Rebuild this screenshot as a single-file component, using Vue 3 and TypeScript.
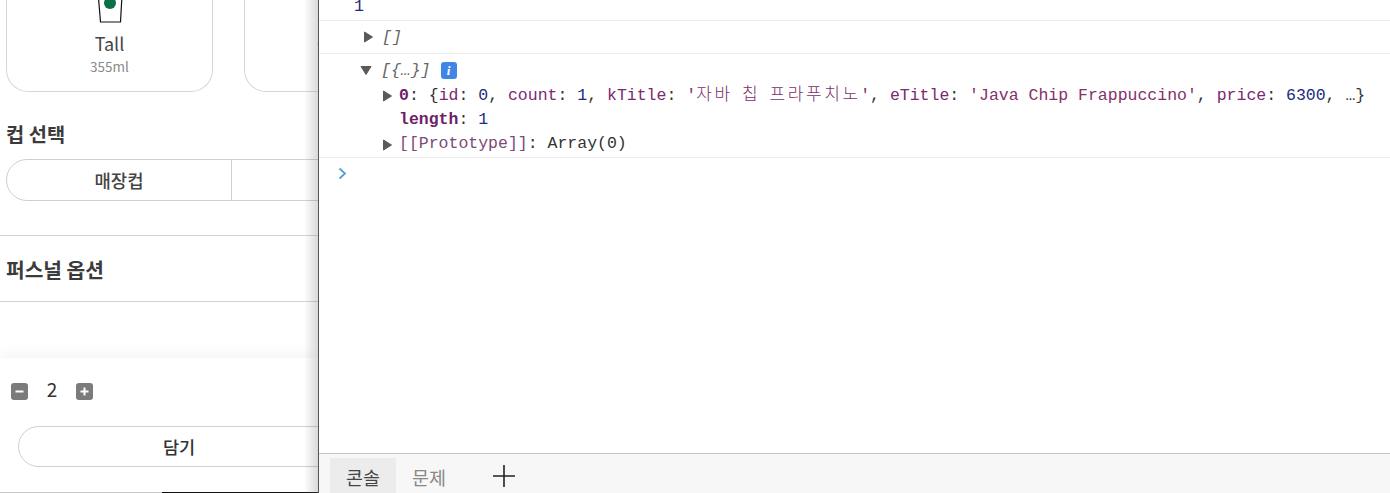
<script setup lang="ts">
interface Size { name: string; volume?: string }
const sizes: Size[] = [
  { name: 'Tall', volume: '355ml' },
  { name: 'Grande' },
]
const quantity = 2
</script>

<template>
  <div class="screen">
    <section class="app">
      <div class="scroll">
        <div class="cards">
          <div v-for="size in sizes" :key="size.name" class="card">
            <svg class="cup" width="34" height="52" viewBox="0 0 34 52">
              <path d="M4.5 15 L29.5 15 L27.5 51 L7.5 51 Z" fill="#fff" stroke="#111" stroke-width="1.2" />
              <circle cx="17" cy="32" r="6" fill="#0b7047" />
            </svg>
            <div class="size-name">{{ size.name }}</div>
            <div v-if="size.volume" class="size-volume">{{ size.volume }}</div>
          </div>
        </div>
        <h3 class="cup-title">컵 선택</h3>
        <div class="segment">
          <div class="seg-item">매장컵</div>
          <div class="seg-item rest"></div>
        </div>
        <div class="personal">퍼스널 옵션</div>
      </div>
      <div class="order">
        <div class="stepper">
          <span class="step"><svg width="17" height="17" viewBox="0 0 17 17"><rect width="17" height="17" rx="3" fill="#7b7b7b" /><rect x="4.5" y="7.5" width="8" height="2" fill="#fff" /></svg></span>
          <span class="qty">{{ quantity }}</span>
          <span class="step"><svg width="17" height="17" viewBox="0 0 17 17"><rect width="17" height="17" rx="3" fill="#7b7b7b" /><rect x="4.5" y="7.5" width="8" height="2" fill="#fff" /><rect x="7.5" y="4.5" width="2" height="8" fill="#fff" /></svg></span>
        </div>
        <div class="add">담기</div>
      </div>
      <div class="peek"></div>
    </section>

    <section class="devtools">
      <div class="log">
        <div class="row row-num"><span class="num">1</span></div>
        <div class="row row-empty">
          <svg class="tri" width="11" height="12" viewBox="0 0 11 12"><path d="M1.5 1 L9.5 6 L1.5 11 Z" fill="#5a5a5a" stroke="#5a5a5a" stroke-linejoin="round" /></svg>
          <span class="summary">[]</span>
        </div>
        <div class="row row-tree">
          <div class="tree-head">
            <svg class="tri-down" width="12" height="11" viewBox="0 0 12 11"><path d="M1 1.5 L11 1.5 L6 9.5 Z" fill="#5a5a5a" stroke="#5a5a5a" stroke-linejoin="round" /></svg>
            <span class="summary">[{…}]</span>
            <span class="info">i</span>
          </div>
          <div class="prop">
            <svg class="tri" width="11" height="12" viewBox="0 0 11 12"><path d="M1.5 1 L9.5 6 L1.5 11 Z" fill="#5a5a5a" stroke="#5a5a5a" stroke-linejoin="round" /></svg>
            <span class="txt"><b class="key">0</b>: {<span class="key">id</span>: <span class="num">0</span>, <span class="key">count</span>: <span class="num">1</span>, <span class="key">kTitle</span>: <span class="str">'<span class="kr">자바 칩 프라푸치노</span>'</span>, <span class="key">eTitle</span>: <span class="str">'Java Chip Frappuccino'</span>, <span class="key">price</span>: <span class="num">6300</span>, …}</span>
          </div>
          <div class="prop">
            <span class="txt"><b class="key">length</b>: <span class="num">1</span></span>
          </div>
          <div class="prop">
            <svg class="tri" width="11" height="12" viewBox="0 0 11 12"><path d="M1.5 1 L9.5 6 L1.5 11 Z" fill="#5a5a5a" stroke="#5a5a5a" stroke-linejoin="round" /></svg>
            <span class="txt"><span class="key proto">[[Prototype]]</span>: Array(0)</span>
          </div>
        </div>
        <div class="prompt">
          <svg width="9" height="13" viewBox="0 0 9 13"><path d="M1.5 1.5 L7 6.5 L1.5 11.5" fill="none" stroke="#4a9fd0" stroke-width="1.7" /></svg>
        </div>
      </div>
      <div class="drawer">
        <div class="tab active">콘솔</div>
        <div class="tab">문제</div>
        <svg class="plus" width="24" height="24" viewBox="0 0 24 24"><path d="M12 1 V23 M1 12 H23" stroke="#222" stroke-width="1.6" /></svg>
      </div>
    </section>
  </div>
</template>

<style>
html, body { margin: 0; background: #fff; overflow: hidden; }
</style>

<style scoped>
.screen {
  display: flex;
  width: 1390px;
  height: 493px;
  overflow: hidden;
  background: #fff;
}
.app {
  position: relative;
  flex: 0 0 318px;
  width: 318px;
  height: 493px;
  overflow: hidden;
  font-family: "Noto Sans CJK KR", "Noto Sans", sans-serif;
  color: #333;
}
.app::after {
  content: "";
  position: absolute;
  top: 0;
  right: 0;
  bottom: 0;
  width: 14px;
  background: linear-gradient(to right, rgba(120,120,120,0), rgba(120,120,120,0.28));
  pointer-events: none;
}
.scroll { height: 358px; overflow: hidden; }
.cards {
  display: flex;
  gap: 31px;
  padding-left: 6px;
  margin-top: -29px;
}
.card {
  flex: 0 0 207px;
  height: 121px;
  box-sizing: border-box;
  border: 1px solid #d6d6d6;
  border-radius: 0 0 22px 22px;
  border-top: none;
  display: flex;
  flex-direction: column;
  align-items: center;
}
.cup { display: block; flex: none; }
.size-name { font-size: 18px; line-height: 24px; margin-top: 8px; color: #444; }
.size-volume { font-size: 13.5px; line-height: 18px; color: #8a8a8a; margin-top: 2px; }
.cup-title {
  margin: 29px 0 0 6px;
  font-size: 19.8px;
  line-height: 26px;
  font-weight: 700;
  color: #3b3b3b;
}
.segment {
  display: flex;
  margin: 12px 0 0 6px;
  width: 450px;
  height: 42px;
  box-sizing: border-box;
  border: 1px solid #cfcfcf;
  border-radius: 21px;
}
.seg-item {
  flex: 0 0 225px;
  box-sizing: border-box;
  border-right: 1px solid #cfcfcf;
  text-align: center;
  font-size: 17.8px;
  font-weight: 500;
  line-height: 40px;
  color: #444;
}
.seg-item.rest { border: none; }
.personal {
  margin-top: 34px;
  height: 67px;
  box-sizing: border-box;
  border-top: 1px solid #d2d2d2;
  border-bottom: 1px solid #d2d2d2;
  padding-left: 6px;
  font-size: 20.3px;
  font-weight: 700;
  line-height: 67px;
  color: #3b3b3b;
}
.order {
  height: 134px;
  box-shadow: 0 -6px 12px rgba(0,0,0,0.035);
  position: relative;
  background: #fff;
}
.stepper {
  display: flex;
  align-items: center;
  padding: 22px 0 0 11px;
  height: 18px;
}
.step { display: block; height: 17px; }
.qty { width: 48px; text-align: center; font-size: 19px; line-height: 18px; color: #333; }
.add {
  margin: 28px 0 0 18px;
  width: 420px;
  height: 41px;
  box-sizing: border-box;
  border: 1px solid #cfcfcf;
  border-radius: 21px;
  padding-right: 98px;
  text-align: center;
  font-size: 17.5px;
  font-weight: 500;
  line-height: 39px;
  color: #333;
}
.peek {
  position: absolute;
  left: 0;
  right: 0;
  bottom: 0;
  height: 1px;
  background: linear-gradient(to right, #c8c8c8 162px, #111 162px);
}
.devtools {
  flex: 1;
  display: flex;
  flex-direction: column;
  height: 493px;
  border-left: 1px solid #555;
  box-sizing: border-box;
  font-family: "Liberation Mono", monospace;
  font-size: 16.5px;
  color: #333;
}
.log { flex: 1; overflow: hidden; }
.row { border-bottom: 1px solid #eeeeee; box-sizing: border-box; }
.row-num { height: 21px; padding-left: 35px; line-height: 13px; }
.row-empty {
  height: 33px;
  padding-left: 44px;
  display: flex;
  align-items: center;
  gap: 8px;
}
.row-tree { height: 104px; padding-top: 4px; }
.tree-head {
  display: flex;
  align-items: center;
  height: 25px;
  padding-left: 41px;
}
.tri-down { margin-right: 9px; }
.summary { font-style: italic; color: #666; }
.info {
  margin-left: 10px;
  width: 16px;
  height: 17px;
  border-radius: 3px;
  background: #3f86e8;
  color: #fff;
  font: italic 700 13px/17px "Liberation Serif", serif;
  text-align: center;
}
.prop {
  position: relative;
  height: 24.5px;
  line-height: 24.5px;
  padding-left: 80px;
  white-space: nowrap;
}
.prop .tri { position: absolute; left: 63px; top: 7px; }
.key { color: #7a2a6e; }
.key.proto { color: #7b4a78; }
b.key { font-weight: 700; color: #6e1f66; }
.num { color: #1c2a80; }
.str { color: #86306a; }
.kr {
  font-family: "Noto Sans CJK KR", sans-serif;
  font-size: 17px;
  font-weight: 300;
  display: inline-block;
  width: 164px;
  letter-spacing: 2.6px;
  word-spacing: 3px;
  line-height: 20px;
  color: #7a3068;
}
.prompt { padding: 9px 0 0 19px; }
.prompt svg { display: block; }
.drawer {
  flex: 0 0 40px;
  box-sizing: border-box;
  height: 40px;
  border-top: 1px solid #c8c8c8;
  background: #f7f7f7;
  display: flex;
  align-items: flex-end;
  padding-left: 11px;
  font-family: "Noto Sans CJK KR", sans-serif;
  font-size: 18.5px;
}
.tab {
  width: 66px;
  height: 35px;
  line-height: 38px;
  text-align: center;
  color: #888;
}
.tab.active { background: #ececec; color: #444; }
.plus { margin: 0 0 5px 30px; }
</style>
